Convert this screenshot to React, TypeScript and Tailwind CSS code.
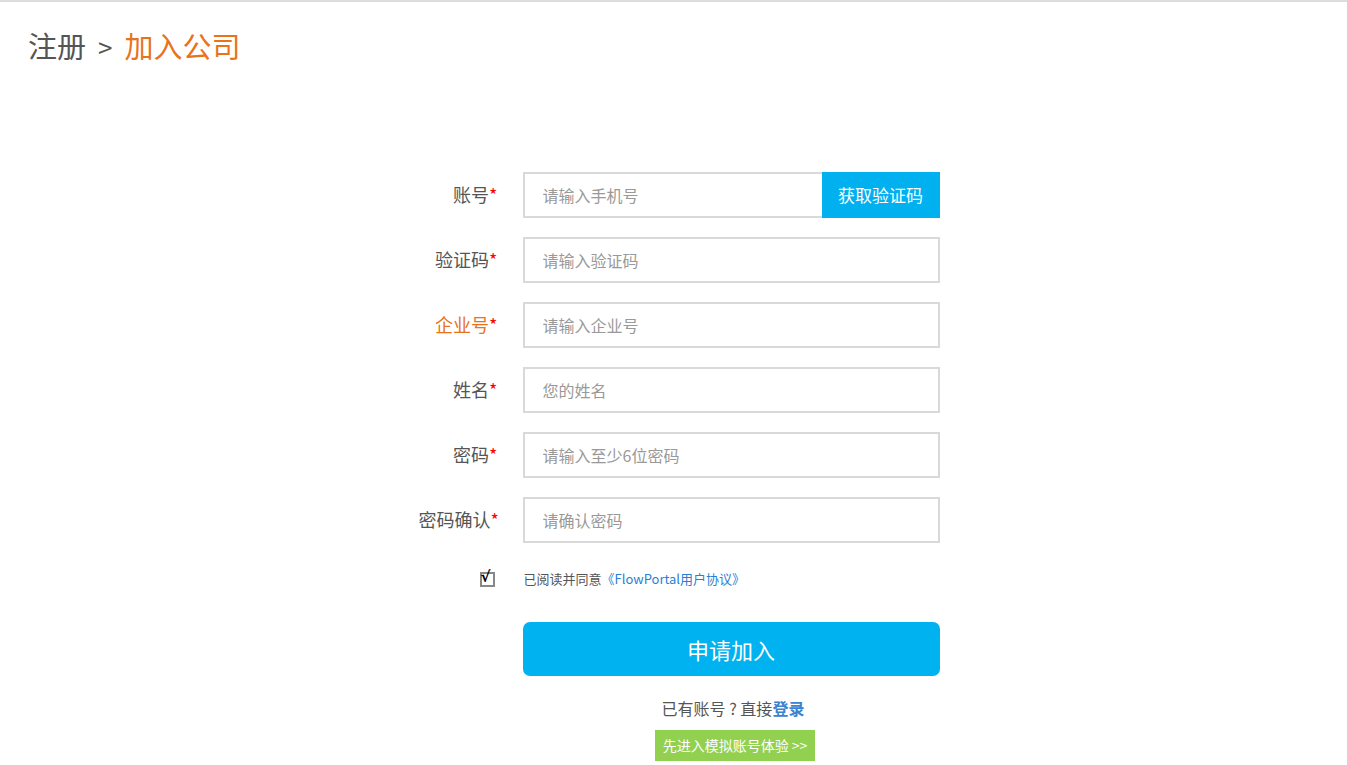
import type { ReactNode } from "react";

const font = {
  fontFamily: '"Microsoft YaHei", "Noto Sans CJK SC", "Noto Sans", sans-serif',
};

interface FieldRowProps {
  label: string;
  placeholder: string;
  highlight?: boolean;
  addon?: ReactNode;
}

const FieldRow = ({ label, placeholder, highlight, addon }: FieldRowProps) => (
  <div className="flex items-center h-[46px]">
    <label
      className={
        "w-[104px] pr-[25px] whitespace-nowrap text-right text-[18px] leading-none -mt-[3px] " +
        (highlight ? "text-[#e8731a]" : "text-[#555]")
      }
    >
      {label}
      <span className="text-[#f00]">*</span>
    </label>
    <div className="flex w-[417px] h-[46px] border-2 border-[#d9d9d9] bg-white">
      <input
        placeholder={placeholder}
        className="flex-1 min-w-0 h-full pl-[18px] text-[16px] text-[#333] placeholder:text-[#999] outline-none"
      />
      {addon}
    </div>
  </div>
);

export default function App() {
  return (
    <div className="min-h-[765px] w-full bg-white border-t-2 border-[#ddd]" style={font}>
      <h1 className="pl-[28px] pt-[23px] text-[29px] leading-[40px] text-[#555] whitespace-nowrap">
        注册<span className="mx-[12px] text-[26px]">&gt;</span>
        <span className="text-[#e8731a]">加入公司</span>
      </h1>

      <div className="flex justify-center pt-[105px]">
        <div className="ml-[11px] w-[521px] flex flex-col gap-[19px]">
          <FieldRow
            label="账号"
            placeholder="请输入手机号"
            addon={
              <button className="w-[118px] h-[46px] -my-[2px] -mr-[2px] bg-[#00b0ef] text-white text-[17px]">
                获取验证码
              </button>
            }
          />
          <FieldRow label="验证码" placeholder="请输入验证码" />
          <FieldRow label="企业号" placeholder="请输入企业号" highlight />
          <FieldRow label="姓名" placeholder="您的姓名" />
          <FieldRow label="密码" placeholder="请输入至少6位密码" />
          <FieldRow label="密码确认" placeholder="请确认密码" />

          <div className="flex items-center h-[20px] mt-[7px]">
            <div className="w-[104px] flex justify-end pr-[28px]">
              <span className="relative w-[15px] h-[15px] border-2 border-[#888]">
                <span className="absolute -left-[1px] -top-[4px] text-[15px] leading-none text-black font-bold" style={{ fontFamily: '"DejaVu Sans", sans-serif' }}>
                  √
                </span>
              </span>
            </div>
            <span className="pl-[1px] text-[13px] text-[#555]">
              已阅读并同意
              <a className="text-[#2a7fd4]">《FlowPortal用户协议》</a>
            </span>
          </div>

          <div className="pl-[104px] mt-[14px]">
            <button className="w-[417px] h-[54px] rounded-[7px] bg-[#00b2f0] text-white text-[22px]">
              申请加入
            </button>
          </div>

          <div className="pl-[104px] flex flex-col items-center mt-[1px]">
            <p className="ml-[4px] text-[16px] text-[#555] leading-[24px]">
              已有账号 ? 直接<a className="text-[#3b82d0] font-bold">登录</a>
            </p>
            <button className="ml-[8px] mt-[10px] w-[160px] h-[31px] bg-[#92d050] text-white text-[14px]">
              先进入模拟账号体验 &gt;&gt;
            </button>
          </div>
        </div>
      </div>
    </div>
  );
}
